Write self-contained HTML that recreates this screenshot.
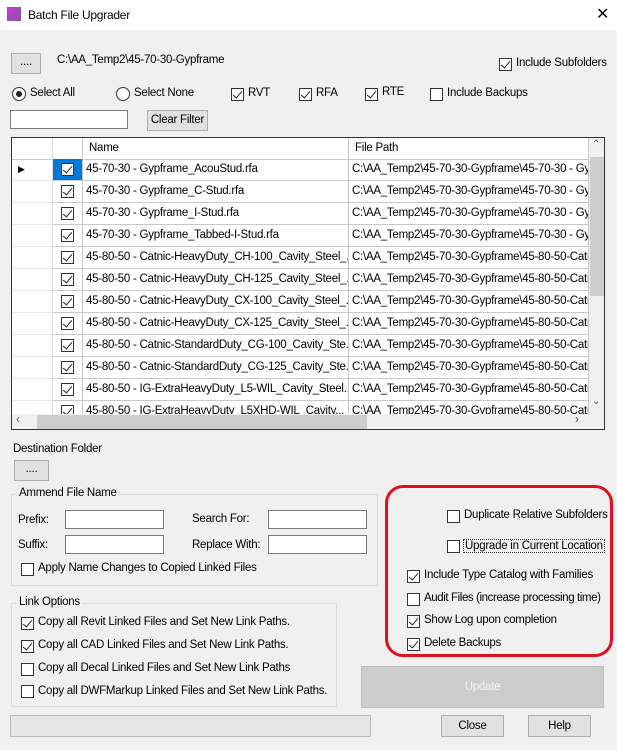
<!DOCTYPE html>
<html><head><style>
*{box-sizing:border-box;margin:0;padding:0}
body{width:617px;height:750px;background:#f0f0f0;font-family:"Liberation Sans",sans-serif;font-size:11.5px;color:#000;position:relative;overflow:hidden;letter-spacing:-0.25px}
.a{position:absolute;white-space:nowrap}
.cb{position:absolute;width:13px;height:13px;border:1px solid #333;background:#fff}
.cb.c::after{content:"";position:absolute;left:3px;top:0px;width:4px;height:8px;border:solid #222;border-width:0 1.3px 1.3px 0;transform:rotate(40deg)}
.btn{position:absolute;background:#e1e1e1;border:1px solid #adadad;text-align:center}
.inp{position:absolute;background:#fff;border:1px solid #7a7a7a}
.grp{position:absolute;border:1px solid #dcdcdc}
.grid{position:absolute;left:11px;top:137px;width:594px;height:293px;border:1px solid #333;background:#fff;overflow:hidden}
.row{position:absolute;left:0;height:22px;width:577px}
.cell{position:absolute;top:0;height:22px;line-height:21px;border-right:1px solid #c8c8c8;border-bottom:1px solid #c8c8c8;overflow:hidden;white-space:nowrap;padding-left:3px}
</style></head><body>
<div class="a" style="left:0;top:0;width:617px;height:30px;background:#fff"></div>
<div class="a" style="left:7px;top:7px;width:14px;height:14px;background:linear-gradient(135deg,#c040d0,#9050a0)"></div>
<div class="a" style="left:28px;top:8px;font-size:12px">Batch File Upgrader</div>
<div class="a" style="left:596px;top:4px;font-size:16px;font-weight:normal">✕</div>

<div class="btn" style="left:11px;top:53px;width:30px;height:21px;line-height:16px">....</div>
<div class="a" style="left:57px;top:54px">C:\AA_Temp2\45-70-30-Gypframe</div>
<div class="cb c" style="left:499px;top:58px"></div>
<div class="a" style="left:516px;top:57px">Include Subfolders</div>

<div class="a" style="left:12px;top:87px;width:14px;height:14px;border:1px solid #333;border-radius:50%;background:#fff"><div style="position:absolute;left:3px;top:3px;width:6px;height:6px;border-radius:50%;background:#222"></div></div>
<div class="a" style="left:30px;top:87px">Select All</div>
<div class="a" style="left:116px;top:87px;width:14px;height:14px;border:1px solid #333;border-radius:50%;background:#fff"></div>
<div class="a" style="left:134px;top:87px">Select None</div>
<div class="cb c" style="left:231px;top:88px"></div><div class="a" style="left:248px;top:87px">RVT</div>
<div class="cb c" style="left:299px;top:88px"></div><div class="a" style="left:316px;top:87px">RFA</div>
<div class="cb c" style="left:365px;top:88px"></div><div class="a" style="left:382px;top:86px">RTE</div>
<div class="cb" style="left:430px;top:88px"></div><div class="a" style="left:447px;top:87px">Include Backups</div>

<div class="inp" style="left:10px;top:110px;width:118px;height:19px"></div>
<div class="btn" style="left:147px;top:110px;width:61px;height:21px;line-height:19px">Clear Filter</div>

<div class="grid">
 <div class="cell" style="left:0;width:41px;border-right-color:#e0e0e0"></div>
 <div class="cell" style="left:41px;width:30px"></div>
 <div class="cell" style="left:71px;width:266px;padding-left:6px">Name</div>
 <div class="cell" style="left:337px;width:240px;padding-left:6px">File Path</div>
 <div id="rows"></div>
 <div class="a" style="left:577px;top:0;width:16px;height:276px;background:#f0f0f0"></div>
 <div class="a" style="left:578px;top:19px;width:14px;height:139px;background:#cdcdcd"></div>
 <div class="a" style="left:580px;top:1px;font-size:10px;color:#555">⌃</div>
 <div class="a" style="left:580px;top:258px;font-size:10px;color:#555">⌄</div>
 <div class="a" style="left:0;top:276px;width:593px;height:16px;background:#f0f0f0"></div>
 <div class="a" style="left:25px;top:277px;width:330px;height:14px;background:#cdcdcd"></div>
 <div class="a" style="left:4px;top:276px;color:#555">‹</div>
 <div class="a" style="left:563px;top:276px;color:#555">›</div>
</div>

<div class="a" style="left:13px;top:443px">Destination Folder</div>
<div class="btn" style="left:14px;top:460px;width:35px;height:21px;line-height:16px">....</div>

<div class="grp" style="left:11px;top:494px;width:367px;height:92px"></div>
<div class="a" style="left:17px;top:487px;background:#f0f0f0;padding:0 2px">Ammend File Name</div>
<div class="a" style="left:18px;top:514px">Prefix:</div>
<div class="inp" style="left:65px;top:510px;width:99px;height:19px"></div>
<div class="a" style="left:18px;top:539px">Suffix:</div>
<div class="inp" style="left:65px;top:535px;width:99px;height:19px"></div>
<div class="a" style="left:192px;top:513px">Search For:</div>
<div class="inp" style="left:268px;top:510px;width:99px;height:19px"></div>
<div class="a" style="left:192px;top:539px">Replace With:</div>
<div class="inp" style="left:268px;top:535px;width:99px;height:19px"></div>
<div class="cb" style="left:21px;top:563px"></div><div class="a" style="left:38px;top:562px">Apply Name Changes to Copied Linked Files</div>

<div class="grp" style="left:11px;top:603px;width:326px;height:104px"></div>
<div class="a" style="left:17px;top:596px;background:#f0f0f0;padding:0 2px">Link Options</div>
<div class="cb c" style="left:21px;top:617px"></div><div class="a" style="left:38px;top:616px">Copy all Revit Linked Files and Set New Link Paths.</div>
<div class="cb c" style="left:21px;top:640px"></div><div class="a" style="left:38px;top:639px">Copy all CAD Linked Files and Set New Link Paths.</div>
<div class="cb" style="left:21px;top:663px"></div><div class="a" style="left:38px;top:662px">Copy all Decal Linked Files and Set New Link Paths</div>
<div class="cb" style="left:21px;top:685px"></div><div class="a" style="left:38px;top:685px">Copy all DWFMarkup Linked Files and Set New Link Paths.</div>

<div class="a" style="left:385px;top:485px;width:228px;height:172px;border:3px solid #e0111c;border-radius:18px"></div>
<div class="cb" style="left:447px;top:510px"></div><div class="a" style="left:464px;top:509px">Duplicate Relative Subfolders</div>
<div class="cb" style="left:447px;top:540px"></div><div class="a" style="left:463px;top:539px;border:1px dotted #333;padding:0 1px">Upgrade in Current Location</div>
<div class="cb c" style="left:407px;top:570px"></div><div class="a" style="left:424px;top:569px">Include Type Catalog with Families</div>
<div class="cb" style="left:407px;top:593px"></div><div class="a" style="left:424px;top:592px;letter-spacing:-0.4px">Audit Files (increase processing time)</div>
<div class="cb c" style="left:407px;top:615px"></div><div class="a" style="left:424px;top:614px">Show Log upon completion</div>
<div class="cb c" style="left:407px;top:638px"></div><div class="a" style="left:424px;top:637px">Delete Backups</div>

<div class="a" style="left:361px;top:666px;width:243px;height:42px;background:#cccccc;border:1px solid #bfbfbf;color:#f4f4f4;text-align:center;line-height:40px">Update</div>

<div class="a" style="left:10px;top:715px;width:361px;height:22px;background:#e6e6e6;border:1px solid #bcbcbc"></div>
<div class="btn" style="left:441px;top:715px;width:63px;height:22px;line-height:20px">Close</div>
<div class="btn" style="left:528px;top:715px;width:63px;height:22px;line-height:20px">Help</div>

<script>
var names=["45-70-30 - Gypframe_AcouStud.rfa","45-70-30 - Gypframe_C-Stud.rfa","45-70-30 - Gypframe_I-Stud.rfa","45-70-30 - Gypframe_Tabbed-I-Stud.rfa","45-80-50 - Catnic-HeavyDuty_CH-100_Cavity_Steel_...","45-80-50 - Catnic-HeavyDuty_CH-125_Cavity_Steel_...","45-80-50 - Catnic-HeavyDuty_CX-100_Cavity_Steel_...","45-80-50 - Catnic-HeavyDuty_CX-125_Cavity_Steel_...","45-80-50 - Catnic-StandardDuty_CG-100_Cavity_Ste...","45-80-50 - Catnic-StandardDuty_CG-125_Cavity_Ste...","45-80-50 - IG-ExtraHeavyDuty_L5-WIL_Cavity_Steel...","45-80-50 - IG-ExtraHeavyDuty_L5XHD-WIL_Cavity..."];
var h="";
for(var i=0;i<names.length;i++){
 var p=i<4?"C:\\AA_Temp2\\45-70-30-Gypframe\\45-70-30 - Gypf":"C:\\AA_Temp2\\45-70-30-Gypframe\\45-80-50-Catnic";
 var yy=21+i*22;
 h+='<div class="row" style="top:'+yy+'px">'+
 '<div class="cell" style="left:0;width:41px;border-right-color:#e0e0e0;border-bottom-color:#e8e8e8;padding-left:6px;font-size:9px">'+(i==0?'▶':'')+'</div>'+
 '<div class="cell" style="left:41px;width:30px;'+(i==0?'background:#0078d7;':'')+'"><div class="cb c" style="left:8px;top:4px"></div></div>'+
 '<div class="cell" style="left:71px;width:266px">'+names[i]+'</div>'+
 '<div class="cell" style="left:337px;width:240px">'+p+'</div></div>';
}
document.getElementById("rows").innerHTML=h;
</script>
</body></html>
